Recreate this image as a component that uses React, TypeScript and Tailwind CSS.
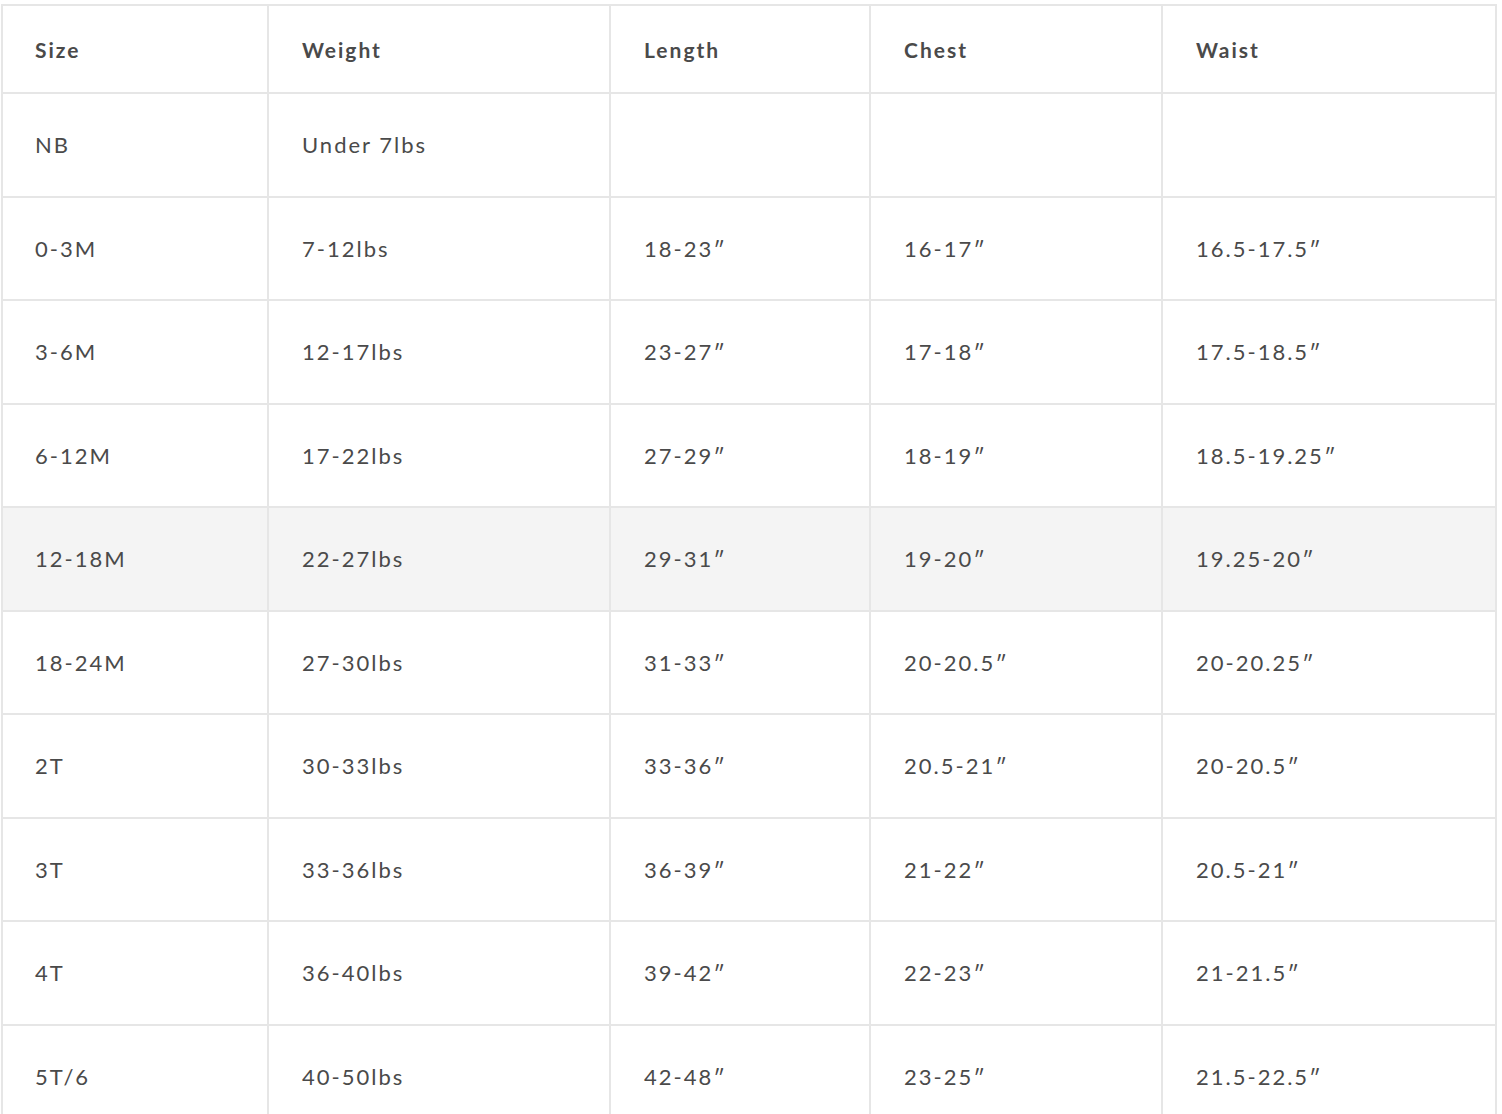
import React from "react";

type SizeRow = {
  size: string;
  weight: string;
  length: string;
  chest: string;
  waist: string;
};

const rows: SizeRow[] = [
  { size: "NB", weight: "Under 7lbs", length: "", chest: "", waist: "" },
  { size: "0-3M", weight: "7-12lbs", length: "18-23″", chest: "16-17″", waist: "16.5-17.5″" },
  { size: "3-6M", weight: "12-17lbs", length: "23-27″", chest: "17-18″", waist: "17.5-18.5″" },
  { size: "6-12M", weight: "17-22lbs", length: "27-29″", chest: "18-19″", waist: "18.5-19.25″" },
  { size: "12-18M", weight: "22-27lbs", length: "29-31″", chest: "19-20″", waist: "19.25-20″" },
  { size: "18-24M", weight: "27-30lbs", length: "31-33″", chest: "20-20.5″", waist: "20-20.25″" },
  { size: "2T", weight: "30-33lbs", length: "33-36″", chest: "20.5-21″", waist: "20-20.5″" },
  { size: "3T", weight: "33-36lbs", length: "36-39″", chest: "21-22″", waist: "20.5-21″" },
  { size: "4T", weight: "36-40lbs", length: "39-42″", chest: "22-23″", waist: "21-21.5″" },
  { size: "5T/6", weight: "40-50lbs", length: "42-48″", chest: "23-25″", waist: "21.5-22.5″" },
];

const headers = ["Size", "Weight", "Length", "Chest", "Waist"];
const widths = ["w-[266px]", "w-[342px]", "w-[260px]", "w-[292px]", "w-[334px]"];

export default function App() {
  return (
    <div className="min-h-screen bg-white pt-[4px] pl-[1px] font-['Lato',sans-serif] text-[#4a4a4a]">
      <table className="table-fixed border-collapse w-[1494px]">
        <colgroup>
          {widths.map((w, i) => (
            <col key={i} className={w} />
          ))}
        </colgroup>
        <thead>
          <tr className="h-[88px]">
            {headers.map((h, i) => (
              <th
                key={h}
                className={`border-2 border-[#e6e6e6] ${i === 0 ? "pl-[32px]" : "pl-[33px]"} pt-[2px] text-left text-[21px] font-bold tracking-[2px]`}
              >
                {h}
              </th>
            ))}
          </tr>
        </thead>
        <tbody>
          {rows.map((r, i) => (
            <tr
              key={r.size}
              className={`h-[103.5px] ${i === 4 ? "bg-[#f4f4f4]" : "bg-white"}`}
            >
              {[r.size, r.weight, r.length, r.chest, r.waist].map((v, j) => (
                <td
                  key={j}
                  className={`border-2 border-[#e6e6e6] ${j === 0 ? "pl-[32px]" : "pl-[33px]"} text-[22px] tracking-[2px]`}
                >
                  {v}
                </td>
              ))}
            </tr>
          ))}
        </tbody>
      </table>
    </div>
  );
}
